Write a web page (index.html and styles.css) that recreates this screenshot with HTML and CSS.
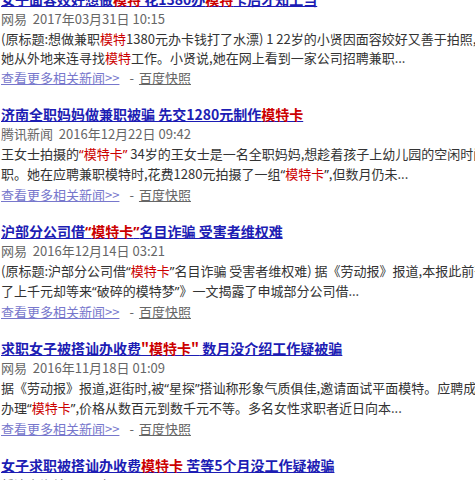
FILE: index.html
```html
<!DOCTYPE html>
<html lang="zh-CN">
<head>
<meta charset="utf-8">
<title>模特卡 新闻</title>
<link rel="stylesheet" href="styles.css">
</head>
<body>
<div class="results">
  <div class="result">
    <h3 class="title"><a href="#">女子面容姣好想做<em>模特</em> 花1380办<em>模特</em>卡后才知上当</a></h3>
    <div class="meta">网易&nbsp;&nbsp;2017年03月31日 10:15</div>
    <div class="abstract">
      <div class="line">(原标题:想做兼职<em>模特</em>1380元办卡钱打了水漂) 1 22岁的小贤因面容姣好又善于拍照,</div>
      <div class="line">她从外地来连寻找<em>模特</em>工作。小贤说,她在网上看到一家公司招聘兼职...</div>
    </div>
    <div class="links"><a class="more" href="#">查看更多相关新闻&gt;&gt;</a><span class="sep">-</span><a class="cache" href="#">百度快照</a></div>
  </div>

  <div class="result">
    <h3 class="title"><a href="#">济南全职妈妈做兼职被骗 先交1280元制作<em>模特卡</em></a></h3>
    <div class="meta">腾讯新闻&nbsp;&nbsp;2016年12月22日 09:42</div>
    <div class="abstract">
      <div class="line">王女士拍摄的<em><span class="q">“</span>模特卡<span class="q">”</span></em> 34岁的王女士是一名全职妈妈,想趁着孩子上幼儿园的空闲时间</div>
      <div class="line">职。她在应聘兼职模特时,花费1280元拍摄了一组<span class="q">“</span><em>模特卡</em><span class="q">”</span>,但数月仍未...</div>
    </div>
    <div class="links"><a class="more" href="#">查看更多相关新闻&gt;&gt;</a><span class="sep">-</span><a class="cache" href="#">百度快照</a></div>
  </div>

  <div class="result">
    <h3 class="title"><a href="#">沪部分公司借<em><span class="q">“</span>模特卡<span class="q">”</span></em>名目诈骗 受害者维权难</a></h3>
    <div class="meta">网易&nbsp;&nbsp;2016年12月14日 03:21</div>
    <div class="abstract">
      <div class="line">(原标题:沪部分公司借<span class="q">“</span><em>模特卡</em><span class="q">”</span>名目诈骗 受害者维权难) 据《劳动报》报道,本报此前刊发</div>
      <div class="line">了上千元却等来<span class="q">“</span>破碎的模特梦<span class="q">”</span>》一文揭露了申城部分公司借...</div>
    </div>
    <div class="links"><a class="more" href="#">查看更多相关新闻&gt;&gt;</a><span class="sep">-</span><a class="cache" href="#">百度快照</a></div>
  </div>

  <div class="result">
    <h3 class="title"><a href="#">求职女子被搭讪办收费<em>"模特卡"</em> 数月没介绍工作疑被骗</a></h3>
    <div class="meta">网易&nbsp;&nbsp;2016年11月18日 01:09</div>
    <div class="abstract">
      <div class="line">据《劳动报》报道,逛街时,被<span class="q">“</span>星探<span class="q">”</span>搭讪称形象气质俱佳,邀请面试平面模特。应聘成功</div>
      <div class="line">办理<span class="q">“</span><em>模特卡</em><span class="q">”</span>,价格从数百元到数千元不等。多名女性求职者近日向本...</div>
    </div>
    <div class="links"><a class="more" href="#">查看更多相关新闻&gt;&gt;</a><span class="sep">-</span><a class="cache" href="#">百度快照</a></div>
  </div>

  <div class="result">
    <h3 class="title"><a href="#">女子求职被搭讪办收费<em>模特卡</em> 苦等5个月没工作疑被骗</a></h3>
    <div class="meta">新浪上海站&nbsp;&nbsp;2016年11月18日 07:50</div>
  </div>
</div>
</body>
</html>
```

FILE: styles.css
```css
html, body {
  margin: 0;
  padding: 0;
  background: #ffffff;
  overflow: hidden;
}

body {
  font-family: "Noto Sans CJK SC", "Noto Sans", sans-serif;
  font-size: 13px;
  color: #333333;
}

.results {
  margin-top: -10.5px;
  padding-left: 1px;
  overflow: hidden;
}

.result {
  margin-bottom: 17px;
}

.title {
  margin: 0;
  font-size: 14px;
  font-weight: bold;
  line-height: 19px;
  white-space: nowrap;
}

.title a {
  color: #1d1db4;
  text-decoration: underline;
}

em {
  font-style: normal;
  color: #cc0000;
}

.q {
  font-family: "Noto Sans", "Liberation Sans", sans-serif;
}

.meta {
  color: #666666;
  line-height: 20px;
  white-space: nowrap;
}

.abstract .line {
  line-height: 19.5px;
  white-space: nowrap;
}

.links {
  line-height: 20px;
  white-space: nowrap;
  color: #666666;
}

.links .more {
  color: #7777cc;
  text-decoration: underline;
}

.links .sep {
  margin: 0 5px 0 10px;
}

.links .cache {
  color: #666666;
  text-decoration: underline;
}
```
